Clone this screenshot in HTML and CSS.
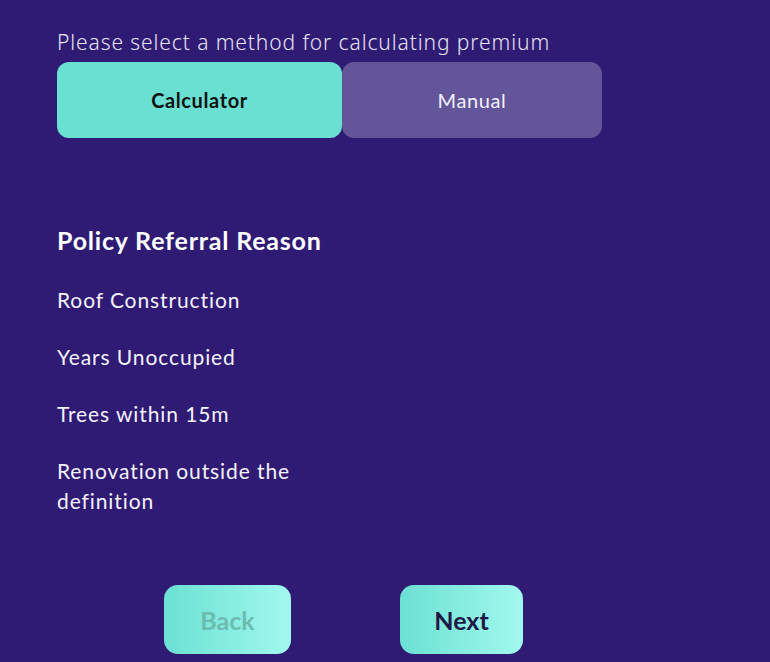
FILE: index.html
```
<html>
<head>
<title>Premium method</title>
<link rel="stylesheet" href="styles.css">
</head>
<body>
<div class="page">
  <div class="label">Please select a method for calculating premium</div>
  <div class="choice">
    <div class="opt opt-on">Calculator</div>
    <div class="opt opt-off">Manual</div>
  </div>

  <div class="reasons">
    <div class="heading">Policy Referral Reason</div>
    <div class="item">Roof Construction</div>
    <div class="item">Years Unoccupied</div>
    <div class="item">Trees within 15m</div>
    <div class="item">Renovation outside the definition</div>
  </div>

  <div class="nav">
    <div class="btn btn-back">Back</div>
    <div class="btn btn-next">Next</div>
  </div>
</div>
</body>
</html>
```

FILE: styles.css
```
html, body{
margin:0;
padding:0;
}
body{
background:#2f1b73;
color:#ffffff;
font-family:"Lato", "Noto Sans", sans-serif;
height:662px;
overflow:hidden;
}
.page{
padding:28px 0 0 57px;
}
.label{
font-family:"Noto Sans", sans-serif;
font-weight:300;
font-size:21px;
letter-spacing:0.9px;
line-height:28px;
color:#e6e2f2;
}
.choice{
display:flex;
margin-top:6px;
}
.opt{
height:76px;
display:flex;
align-items:center;
justify-content:center;
border-radius:12px;
font-size:20px;
letter-spacing:0.6px;
}
.opt-on{
width:285px;
background:#6ae0d3;
color:#111111;
font-weight:700;
}
.opt-off{
width:260px;
background:#62559a;
color:#f4f2fa;
}
.reasons{
margin-top:86px;
width:290px;
}
.heading{
font-size:25px;
letter-spacing:0.8px;
line-height:32px;
font-weight:700;
white-space:nowrap;
margin-bottom:29px;
}
.item{
font-size:21px;
letter-spacing:0.9px;
line-height:30px;
margin-bottom:27px;
color:#f4f2fa;
}
.nav{
display:flex;
gap:109px;
margin-top:69px;
padding-left:107px;
}
.btn{
height:69px;
border-radius:14px;
display:flex;
align-items:center;
justify-content:center;
font-size:25px;
font-weight:700;
background:linear-gradient(to right, #6be0d3, #a2f8ee);
}
.btn-back{
width:127px;
color:#6cbcb0;
}
.btn-next{
width:123px;
color:#1c1a44;
}
```
